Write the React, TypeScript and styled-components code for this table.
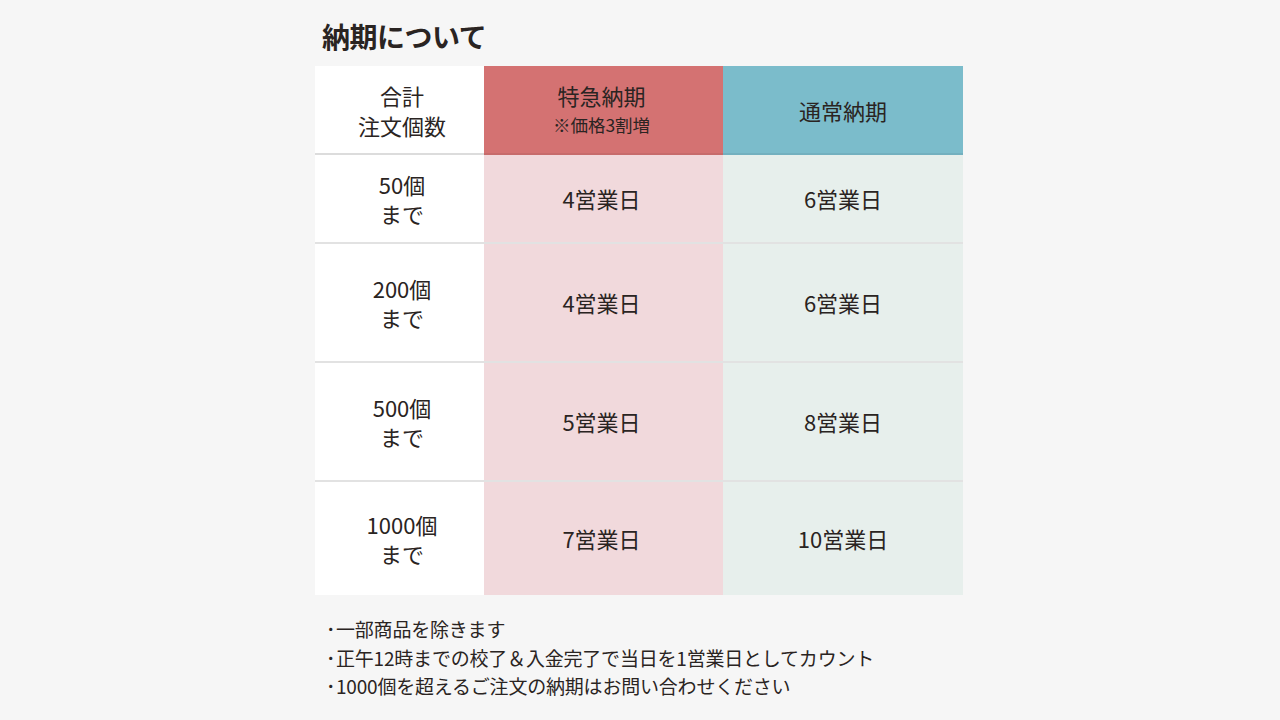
import React from 'react'
import styled, { createGlobalStyle } from 'styled-components'

const GlobalStyle = createGlobalStyle`
  html, body {
    margin: 0;
    padding: 0;
    background: #f6f6f6;
  }
  body {
    font-family: "Noto Sans CJK JP", "Noto Sans", sans-serif;
    color: #2a2422;
  }
`

const colors = {
  page: '#f6f6f6',
  ink: '#2a2422',
  rule: '#e2e2e2',
  express: '#d47272',
  expressBody: '#f1d9dc',
  normal: '#7bbccb',
  normalBody: '#e7efec',
}

type Tone = 'plain' | 'express' | 'normal'

const Page = styled.div`
  width: 1280px;
  height: 720px;
  display: flex;
  justify-content: center;
  padding-right: 2px;
  box-sizing: border-box;
`

const Section = styled.section`
  width: 648px;
  display: flex;
  flex-direction: column;
`

const Title = styled.h2`
  margin: 16px 0 0 7px;
  height: 50px;
  font-size: 28px;
  font-weight: 700;
  line-height: 40px;
  letter-spacing: -0.5px;
`

const Table = styled.div`
  display: grid;
  grid-template-columns: 169px 239px 240px;
  grid-template-rows: 89px 89px 119px 119px 113px;
`

const bodyBg = (tone: Tone) =>
  tone === 'express' ? colors.expressBody : tone === 'normal' ? colors.normalBody : '#ffffff'

const headBg = (tone: Tone) =>
  tone === 'express' ? colors.express : tone === 'normal' ? colors.normal : '#ffffff'

const HeadCell = styled.div<{ $tone: Tone }>`
  background: ${p => headBg(p.$tone)};
  border-bottom: 2px solid ${p => (p.$tone === 'plain' ? '#dcdcdc' : 'rgba(0,0,0,0.06)')};
  display: flex;
  flex-direction: column;
  align-items: center;
  justify-content: center;
  text-align: center;
  font-size: 22px;
  line-height: 30px;
  padding-left: ${p => (p.$tone === 'plain' ? 5 : 0)}px;
  padding-right: ${p => (p.$tone === 'express' ? 4 : 0)}px;
`

const Note = styled.span`
  font-size: 17.5px;
  line-height: 30px;
`

const Cell = styled.div<{ $tone: Tone; $last?: boolean }>`
  background: ${p => bodyBg(p.$tone)};
  border-bottom: ${p => (p.$last ? 'none' : `2px solid ${colors.rule}`)};
  display: flex;
  align-items: center;
  justify-content: center;
  text-align: center;
  font-size: 22px;
  line-height: 29px;
  padding-left: ${p => (p.$tone === 'plain' ? 5 : 0)}px;
  padding-right: ${p => (p.$tone === 'express' ? 4 : 0)}px;
`

const Notes = styled.ul`
  list-style: none;
  margin: 20px 0 0 11px;
  padding: 0;
  font-size: 19px;
  line-height: 28.5px;
  letter-spacing: -0.2px;
`

const NoteItem = styled.li`
  display: flex;
  &::before {
    content: '･';
    width: 10px;
  }
`

const rows = [
  { qty: '50個', express: '4営業日', normal: '6営業日' },
  { qty: '200個', express: '4営業日', normal: '6営業日' },
  { qty: '500個', express: '5営業日', normal: '8営業日' },
  { qty: '1000個', express: '7営業日', normal: '10営業日' },
]

const notes = [
  '一部商品を除きます',
  '正午12時までの校了＆入金完了で当日を1営業日としてカウント',
  '1000個を超えるご注文の納期はお問い合わせください',
]

export default function App() {
  return (
    <>
      <GlobalStyle />
      <Page>
        <Section>
          <Title>納期について</Title>
          <Table>
            <HeadCell $tone="plain">
              合計<br />注文個数
            </HeadCell>
            <HeadCell $tone="express">
              特急納期
              <Note>※価格3割増</Note>
            </HeadCell>
            <HeadCell $tone="normal">通常納期</HeadCell>
            {rows.map((r, i) => {
              const last = i === rows.length - 1
              return (
                <React.Fragment key={r.qty}>
                  <Cell $tone="plain" $last={last}>
                    {r.qty}<br />まで
                  </Cell>
                  <Cell $tone="express" $last={last}>{r.express}</Cell>
                  <Cell $tone="normal" $last={last}>{r.normal}</Cell>
                </React.Fragment>
              )
            })}
          </Table>
          <Notes>
            {notes.map(n => (
              <NoteItem key={n}>{n}</NoteItem>
            ))}
          </Notes>
        </Section>
      </Page>
    </>
  )
}
